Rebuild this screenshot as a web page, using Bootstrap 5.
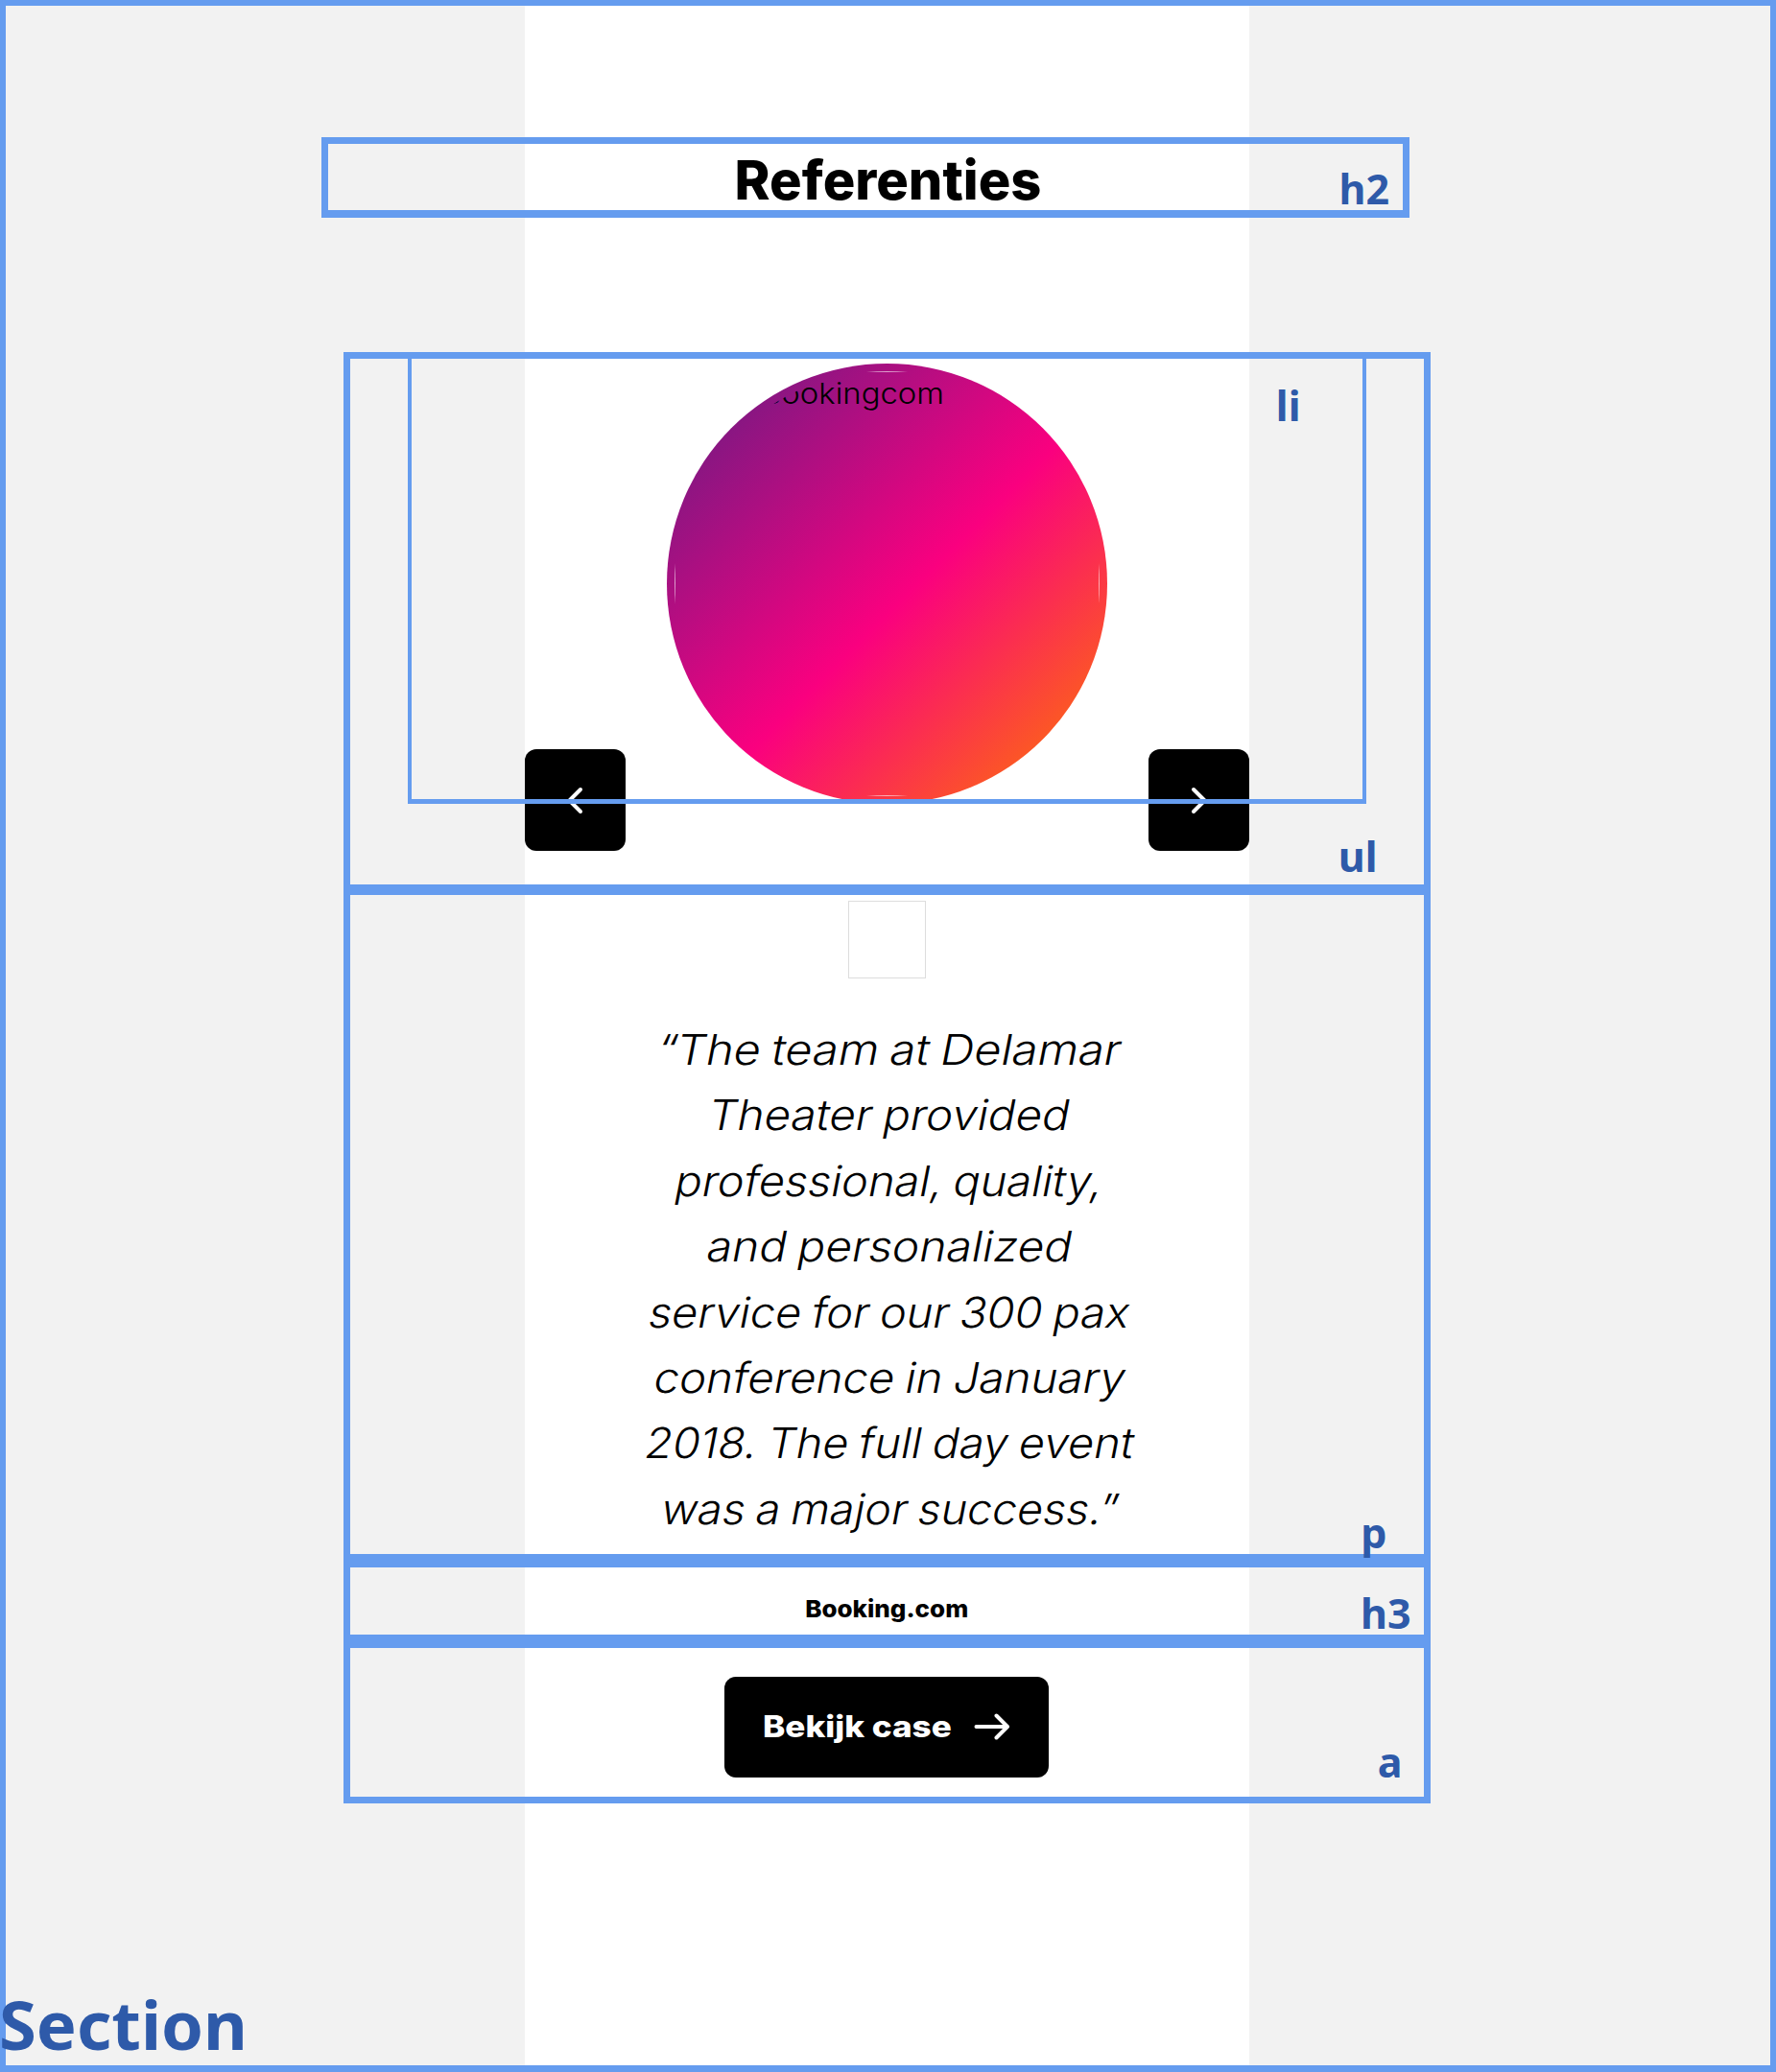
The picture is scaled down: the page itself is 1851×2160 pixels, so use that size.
<!DOCTYPE html>
<html lang="nl">
<head>
<meta charset="utf-8">
<title>Referenties</title>
<link href="https://cdn.jsdelivr.net/npm/bootstrap@5.3.0/dist/css/bootstrap.min.css" rel="stylesheet">
<style>
body{margin:0;background:#f2f2f2;color:#000;font-family:Inter,"Liberation Sans",sans-serif}
.frame{height:2160px;border:6px solid #659cef;border-bottom-width:7px;background:linear-gradient(#fff,#fff) 541px 0/755px 100% no-repeat #f2f2f2}
.outline{border:7px solid #659cef;width:100%}
.tag{position:absolute;font:700 43px/1 "Noto Sans","Open Sans",sans-serif;color:#2e5aa9;z-index:4;white-space:nowrap}
.head-box{width:1134px;margin:137px 0 0 329px;height:84px;border-bottom-width:8px;padding:8px 0 0 47px}
.head-title{font-size:56px;font-weight:800}
.stack{margin:140px 0 0 351.500px;width:1133px}
.list-box{height:562px;padding:0 60px}
.slide{height:471px;margin-top:-7px}
.slide::after{content:"";position:absolute;inset:0;border:5px solid #659cef;border-width:7px 4px 5px;z-index:3;pointer-events:none}
.disc{width:459px;height:459px;margin-top:12px;background:linear-gradient(135deg,#5f1e83 0%,#fa007f 53.500%,#fc5824 86%)}
.disc-img{width:443px;height:443px}
.disc-alt{width:443px;height:443px;border:1px solid rgba(255,255,255,.6);font-size:30px;font-weight:300;line-height:1;padding:7px 0 0 89px}
.disc-alt span{display:inline-block;transform:scaleX(1.095);transform-origin:left}
.sq{width:105px;height:105.5px;border-radius:12px;background:#000;border:0}
.controls{position:absolute;left:182.500px;top:407px;width:755px}
.quote-box{height:701px;margin-top:-3px;padding-top:6px}
.thumb{width:81px;height:81px;border:1px solid #ddd}
.quote{font-size:44px;font-weight:300;line-height:68.4px;margin:40px 0 0 7px;word-spacing:-2px}
.quote span{white-space:nowrap;transform:skewX(-11deg) scaleX(var(--stretch))}
.name-box{height:84px;padding-top:18px}
.name-title{font-size:24.5px;font-weight:800;transform:scaleX(1.06)}
.cta-box{height:169px;padding-top:9px}
.cta{width:338px;height:105px;border-radius:12px;background:#000;color:#fff;font-size:31.5px;font-weight:800;padding:0 40px 0 40px}
.cta span{transform:scaleX(1.115);transform-origin:left}
</style>
</head>
<body>
<section class="frame position-relative">
  <div class="outline head-box position-relative d-flex align-items-center justify-content-center">
    <h2 class="head-title m-0 text-nowrap">Referenties</h2>
    <span class="tag" style="right:14px;bottom:1px">h2</span>
  </div>
  <div class="stack d-flex flex-column">
    <ul class="outline list-box list-unstyled position-relative m-0">
      <li class="slide position-relative d-flex justify-content-center align-items-start">
        <div class="disc rounded-circle d-flex align-items-center justify-content-center">
          <div class="disc-img rounded-circle overflow-hidden"><div class="disc-alt"><span>Bookingcom</span></div></div>
        </div>
        <span class="tag" style="right:68px;top:34px">li</span>
      </li>
      <li class="controls d-flex justify-content-between">
        <button class="sq p-0" aria-label="Vorige"><svg class="d-block" width="105" height="105" fill="none" stroke="#fff" stroke-width="4" stroke-linecap="round" stroke-linejoin="round"><path d="M58 42 46.500 53.500 58 65"/></svg></button>
        <button class="sq p-0" aria-label="Volgende"><svg class="d-block" width="105" height="105" fill="none" stroke="#fff" stroke-width="4" stroke-linecap="round" stroke-linejoin="round"><path d="M47 42 58.500 53.500 47 65"/></svg></button>
      </li>
      <li class="tag" style="right:48px;bottom:8px">ul</li>
    </ul>
    <div class="outline quote-box position-relative d-flex flex-column align-items-center">
      <div class="thumb"></div>
      <p class="quote mb-0 d-flex flex-column align-items-center">
        <span style="--stretch:1.105">“The team at Delamar</span>
        <span style="--stretch:1.08">Theater provided</span>
        <span style="--stretch:1.065">professional, quality,</span>
        <span style="--stretch:1.089">and personalized</span>
        <span style="--stretch:1.065">service for our 300 pax</span>
        <span style="--stretch:1.078">conference in January</span>
        <span style="--stretch:1.062">2018. The full day event</span>
        <span style="--stretch:1.058">was a major success.”</span>
      </p>
      <span class="tag" style="right:38px;bottom:1px">p</span>
    </div>
    <div class="outline name-box position-relative d-flex align-items-center justify-content-center">
      <h3 class="name-title m-0">Booking.com</h3>
      <span class="tag" style="right:13px;bottom:1px">h3</span>
    </div>
    <div class="outline cta-box position-relative d-flex align-items-center justify-content-center">
      <a class="cta d-flex align-items-center justify-content-between text-decoration-none" href="#"><span>Bekijk case</span>
        <svg width="38" height="30" fill="none" stroke="#fff" stroke-width="4" stroke-linecap="round" stroke-linejoin="round"><path d="M2.500 15H35M23.500 3.500 35 15 23.500 26.500"/></svg></a>
      <span class="tag" style="right:22px;bottom:15px">a</span>
    </div>
  </div>
  <span class="tag" style="left:-7px;bottom:8px;font-size:70.5px">Section</span>
</section>
<script src="https://cdn.jsdelivr.net/npm/bootstrap@5.3.0/dist/js/bootstrap.bundle.min.js"></script>
</body>
</html>
